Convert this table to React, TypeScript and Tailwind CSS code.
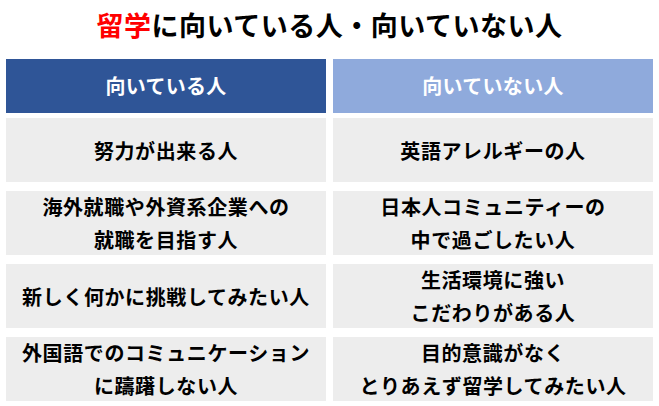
import { Fragment } from "react";

const rows: [string[], string[]][] = [
  [["努力が出来る人"], ["英語アレルギーの人"]],
  [["海外就職や外資系企業への", "就職を目指す人"], ["日本人コミュニティーの", "中で過ごしたい人"]],
  [["新しく何かに挑戦してみたい人"], ["生活環境に強い", "こだわりがある人"]],
  [["外国語でのコミュニケーション", "に躊躇しない人"], ["目的意識がなく", "とりあえず留学してみたい人"]],
];

function Cell({ lines }: { lines: string[] }) {
  return (
    <div className="h-[64px] bg-[#ededed] flex flex-col items-center justify-center text-center text-[20px] leading-[33px] font-bold tracking-[0.6px] text-black">
      {lines.map((l) => (
        <div key={l}>{l}</div>
      ))}
    </div>
  );
}

export default function App() {
  return (
    <div
      className="w-[659px] h-[406px] bg-white overflow-hidden"
      style={{ fontFamily: '"Noto Sans CJK JP", "Noto Sans", sans-serif' }}
    >
      <div className="h-[50px] flex items-center justify-center text-[27px] font-bold tracking-[0.5px] text-black">
        <span className="text-[#ff0000]">留学</span>
        <span>に向いている人・向いていない人</span>
      </div>

      <div className="mt-[9px] ml-[6px] grid grid-cols-[320px_320px] gap-x-[7px]">
        <div className="h-[54px] bg-[#2f5597] flex items-center justify-center text-white text-[20px] font-bold tracking-[0.3px]">
          向いている人
        </div>
        <div className="h-[54px] bg-[#8faadc] flex items-center justify-center text-white text-[20px] font-bold tracking-[0.3px]">
          向いていない人
        </div>
      </div>

      <div className="mt-[5px] ml-[6px] grid grid-cols-[320px_320px] gap-x-[7px] gap-y-[9px]">
        {rows.map(([left, right], i) => (
          <Fragment key={i}>
            <Cell lines={left} />
            <Cell lines={right} />
          </Fragment>
        ))}
      </div>
    </div>
  );
}
